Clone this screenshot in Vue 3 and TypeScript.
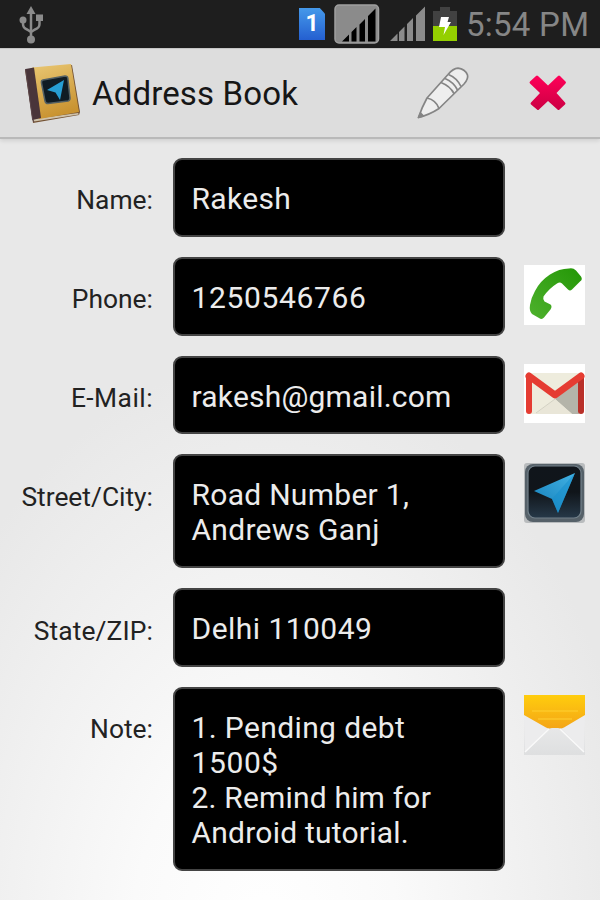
<script setup lang="ts">
interface Field {
  label: string
  key: string
  lines: string[]
  icon?: 'phone' | 'mail' | 'nav' | 'letter'
}

const fields: Field[] = [
  { label: 'Name:', key: 'name', lines: ['Rakesh'] },
  { label: 'Phone:', key: 'phone', lines: ['1250546766'], icon: 'phone' },
  { label: 'E-Mail:', key: 'email', lines: ['rakesh@gmail.com'], icon: 'mail' },
  { label: 'Street/City:', key: 'street', lines: ['Road Number 1,', 'Andrews Ganj'], icon: 'nav' },
  { label: 'State/ZIP:', key: 'state', lines: ['Delhi 110049'] },
  { label: 'Note:', key: 'note', lines: ['1. Pending debt', '1500$', '2. Remind him for', 'Android tutorial.'], icon: 'letter' },
]
</script>

<template>
  <div class="screen">
    <div class="status">
      <svg class="usb" width="28" height="40" viewBox="0 0 28 40">
        <g fill="none" stroke="#8b8b8b" stroke-width="2.5">
          <path d="M13 9V35" />
          <path d="M5 16V20Q5 24 9 25.500L13 28" />
          <path d="M21.500 14V20Q21.500 24 17 25.500L13 28" />
        </g>
        <path d="M13 2L17.500 10H8.500Z" fill="#8b8b8b" />
        <circle cx="5" cy="16" r="3.500" fill="#8b8b8b" />
        <rect x="18" y="10.500" width="7" height="6.500" fill="#8b8b8b" />
        <circle cx="13" cy="35.500" r="4" fill="#8b8b8b" />
      </svg>
      <div class="sim"><span>1</span></div>
      <svg class="sig-box" width="46" height="40" viewBox="0 0 46 40">
        <rect x="1" y="1" width="43.500" height="38" rx="4" fill="#8b8b8b" stroke="#a0a0a0" stroke-width="1.500" />
        <path d="M8 37.500L15 30.500V37.500ZM17.500 28L22.500 23V37.500H17.500ZM25.500 20.500L31 15V37.500H25.500ZM34 12L41.500 4.500V37.500H34Z" fill="#000" />
      </svg>
      <svg class="sig" width="36" height="36" viewBox="0 0 36 36">
        <path d="M0 35L7.500 27.500V35ZM9 26L14.500 20.500V35H9ZM17 18L23 12V35H17ZM26 9.500L35 .5V35H26Z" fill="#8b8b8b" />
      </svg>
      <svg class="battery" width="24" height="35" viewBox="0 0 24 35">
        <path d="M7 0H17V4H24V19H0V4H7Z" fill="#414141" />
        <rect y="19" width="24" height="15" fill="#94cf00" />
        <path d="M8 10H16L14.500 15H18L10.500 28L12 20H6Z" fill="#fff" />
      </svg>
      <span class="clock">5:54 PM</span>
    </div>

    <header class="bar">
      <svg class="book" width="60" height="64" viewBox="0 0 60 64">
        <defs>
          <linearGradient id="cover" x1="0" y1="0" x2="0.3" y2="1">
            <stop offset="0" stop-color="#e9c773" />
            <stop offset="1" stop-color="#c99331" />
          </linearGradient>
        </defs>
        <path d="M2 7L49 2L57 49L56 52L10 60Z" fill="#735234" />
        <path d="M10 56L55 50L56 51.500L11 58.500Z" fill="#cfc2aa" />
        <path d="M9 4.500L48 1L56 49L16 56Z" fill="url(#cover)" />
        <path d="M2.500 6L11 4.500L18 55L9.500 57Z" fill="#49353a" />
        <path d="M2.500 6L9.500 56L11 59" fill="none" stroke="#59454a" stroke-width="1" />
        <path d="M20 17L42 13Q44.500 13 44.800 15L47 35Q47 37.500 45 38L25 40.500Q22.500 40.500 22 38L18.500 20Q18 17.500 20 17Z" fill="#101c24" stroke="#536064" stroke-width="1.500" />
        <path d="M24 27L41 17L37 37L32.500 29.500Z" fill="#279ed3" />
      </svg>
      <h1>Address Book</h1>
      <svg class="pencil" width="54" height="54" viewBox="0 0 54 54">
        <g fill="#eee" stroke="#858585" stroke-width="1.700" stroke-linejoin="round">
          <path d="M1.500 50.500Q5 40 10 31L31 7.500Q36 1.500 41 1.200Q48 2 50.500 8Q51.500 12 47 17L22 41.500Q13 47.500 1.500 50.500Z" />
          <path d="M10 31Q19 33 22 41.500M24 15.500Q33 19 37 26.500M28 11.500Q36.500 15 40.500 23M31.500 7.500Q40 11 44 19.500" fill="none" />
          <path d="M1.500 50.500L3.500 46L6.500 49Z" fill="#858585" />
        </g>
      </svg>
      <svg class="close" width="38" height="37" viewBox="0 0 38 37">
        <defs>
          <linearGradient id="cross" x1="0" y1="0" x2="0" y2="1">
            <stop offset="0" stop-color="#ff0058" />
            <stop offset="1" stop-color="#cb0043" />
          </linearGradient>
        </defs>
        <path d="M7 1Q8 0 9 1L19 10.500L29 1Q30 0 31 1L36.500 6.500Q37.500 7.500 36.500 8.500L27.500 18L36 27.500Q37 28.500 36 29.500L30.500 34.500Q29.500 35.500 28.500 34.500L19 26L10 34.500Q9 35.500 8 34.500L2 29.500Q1 28.500 2 27.500L11 18L1 8.500Q0 7.500 1 6.500Z" fill="url(#cross)" />
      </svg>
    </header>

    <main class="form">
      <div v-for="f in fields" :key="f.key" class="row">
        <label :class="'label-' + f.key">{{ f.label }}</label>
        <div class="box">
          <div v-for="(line, i) in f.lines" :key="i" class="line"><span :class="'t-' + f.key + i">{{ line }}</span></div>
        </div>
        <svg v-if="f.icon === 'phone'" class="icon" width="61" height="60" viewBox="0 0 61 60">
          <defs>
            <linearGradient id="green" x1="1" y1="0" x2="0" y2="1">
              <stop offset="0" stop-color="#239706" />
              <stop offset="1" stop-color="#4eb12d" />
            </linearGradient>
          </defs>
          <rect width="61" height="60" fill="#fff" />
          <path d="M45 3.500Q49 2.500 52 5.500L57 11.500Q59 14.500 56 16.500L48 24.500Q46 26.500 44 24.500L38 18.500Q36 16.500 33 18.500Q25 23.500 19.500 31.500Q18.500 34.500 20.500 36.500L26.500 39.500Q28.500 41.500 26.500 44.500L20 52.500Q18 55 15 53L8 49Q5 46 6 40Q7 33 11 26Q16 16 26 9.500Q35 3.500 45 3.500Z" fill="url(#green)" />
        </svg>
        <svg v-else-if="f.icon === 'mail'" class="icon" width="61" height="59" viewBox="0 0 61 59">
          <rect width="61" height="59" fill="#fff" />
          <rect x="4" y="9" width="54" height="41" fill="#eeecdd" />
          <path d="M31 35L55 14V50H48Z" fill="#b4b4a9" />
          <path d="M31 35L48 50H12Z" fill="#e9e6d8" />
          <path d="M31 35L12 49" stroke="#d4d2c4" />
          <path d="M5 14V47" stroke="#e53c32" stroke-width="6" stroke-linecap="round" />
          <path d="M57 14V47" stroke="#b93029" stroke-width="6" stroke-linecap="round" />
          <path d="M5 12L31 31L57 12" fill="none" stroke="#e53c32" stroke-width="7" stroke-linecap="round" stroke-linejoin="round" />
        </svg>
        <svg v-else-if="f.icon === 'nav'" class="icon" width="61" height="60" viewBox="0 0 61 60">
          <defs>
            <linearGradient id="dark" x1="0" y1="0" x2="0" y2="1">
              <stop offset="0" stop-color="#10151b" />
              <stop offset="0.5" stop-color="#10151a" />
              <stop offset="1" stop-color="#263848" />
            </linearGradient>
            <linearGradient id="arrow" x1="1" y1="0" x2="0.2" y2="1">
              <stop offset="0" stop-color="#42b2e4" />
              <stop offset="1" stop-color="#1782bd" />
            </linearGradient>
          </defs>
          <rect width="61" height="60" rx="3" fill="#b9bcbe" />
          <rect x="1" y="1" width="59" height="58" rx="8" fill="#566169" />
          <rect x="4" y="3" width="53" height="52" rx="7" fill="url(#dark)" stroke="#72808a" stroke-width="1.200" />
          <path d="M10 28L51 10L34 50L28 36Z" fill="url(#arrow)" />
          <path d="M28 36L51 10L34 50Z" fill="#168ecb" opacity=".5" />
        </svg>
        <svg v-else-if="f.icon === 'letter'" class="icon" width="61" height="60" viewBox="0 0 61 60">
          <defs>
            <linearGradient id="yellow" x1="0" y1="0" x2="0" y2="1">
              <stop offset="0" stop-color="#ffcd0d" />
              <stop offset="1" stop-color="#f4a517" />
            </linearGradient>
            <linearGradient id="paper" x1="0" y1="0" x2="0" y2="1">
              <stop offset="0" stop-color="#f2f2f2" />
              <stop offset="1" stop-color="#dedfe0" />
            </linearGradient>
          </defs>
          <rect width="61" height="60" fill="url(#paper)" />
          <path d="M0 20L25 33L1 57ZM61 20L37 33L60 57Z" fill="#ececed" />
          <path d="M0 0H61V20L40 32.500Q37 34 34 33H28Q25 34 22 32.500L0 20Z" fill="url(#yellow)" />
          <path d="M8 16H54M14 24H48" stroke="#ffd033" stroke-width="1" />
          <path d="M1 57L25 34M36 34L60 57" fill="none" stroke="#fafafa" stroke-width="1.500" />
        </svg>
      </div>
    </main>
  </div>
</template>

<style>
body { margin: 0; overflow: hidden; }
</style>

<style scoped>
.screen {
  width: 600px;
  height: 900px;
  display: flex;
  flex-direction: column;
  overflow: hidden;
  font-family: Roboto, "Liberation Sans", sans-serif;
  background: radial-gradient(ellipse 380px 580px at 265px 940px, #fff 0%, #fafafa 35%, #e8e8e8 100%);
}
.status {
  box-sizing: border-box;
  height: 48px;
  flex: none;
  display: flex;
  align-items: flex-start;
  padding: 4px 0 0 18px;
  background: #1e1e1e;
}
.sim {
  box-sizing: border-box;
  width: 26px;
  height: 32px;
  margin: 4px 0 0 253px;
  display: flex;
  align-items: center;
  justify-content: center;
  background: linear-gradient(#4599ea, #245fd0);
  clip-path: polygon(0 0, 80% 0, 100% 18%, 100% 100%, 0 100%);
  color: #fff;
  font-weight: 700;
  font-size: 23px;
  line-height: 32px;
}
.sig-box { margin-left: 9px; }
.sig { margin: 2px 0 0 10px; }
.battery { margin: 3px 0 0 7px; }
.clock {
  margin: 2px 0 0 9px;
  color: #868686;
  font-size: 33px;
  line-height: 38px;
  letter-spacing: .25px;
  white-space: nowrap;
}
.bar {
  box-sizing: border-box;
  height: 91px;
  flex: none;
  display: flex;
  align-items: flex-start;
  padding-left: 23px;
  background: #ddd;
  border-top: 1px solid #c6c6c6;
  border-bottom: 2px solid #b9b9b9;
  box-shadow: 0 2px 4px rgba(0, 0, 0, .1);
}
.book { margin-top: 14px; }
h1 {
  width: 325px;
  margin: 25px 0 0 9px;
  font-size: 33px;
  font-weight: 400;
  line-height: 40px;
  letter-spacing: .15px;
  color: #161616;
  white-space: nowrap;
}
.pencil { margin: 18px 0 0 0; }
.close { margin: 26px 0 0 58px; }
.form {
  display: flex;
  flex-direction: column;
  gap: 20px;
  padding-top: 19px;
}
.row {
  display: grid;
  grid-template-columns: 153px 332px 61px;
  column-gap: 19.500px;
  align-items: start;
}
label {
  margin-top: 26.400px;
  text-align: right;
  font-size: 26.400px;
  line-height: 33px;
  color: #222;
  white-space: nowrap;
}
.label-email { letter-spacing: .45px; }
.label-state { letter-spacing: .1px; }
.box {
  box-sizing: border-box;
  padding: 20.900px 0 19px 17px;
  border: 2px solid #444;
  border-radius: 9px;
  background: #000;
}
.line {
  height: 34.950px;
  font-size: 30px;
  line-height: 36px;
  color: #ececec;
  white-space: pre;
}
.t-name0 { letter-spacing: .35px; }
.t-phone0 { letter-spacing: .65px; }
.t-email0 { letter-spacing: .2px; }
.t-street0 { letter-spacing: .28px; }
.t-street1 { letter-spacing: .28px; }
.t-state0 { letter-spacing: .46px; }
.t-note0 { letter-spacing: .38px; }
.t-note1 { letter-spacing: .6px; }
.t-note2 { letter-spacing: .18px; }
.t-note3 { letter-spacing: .22px; }
.icon { margin-top: 8.300px; }
</style>
